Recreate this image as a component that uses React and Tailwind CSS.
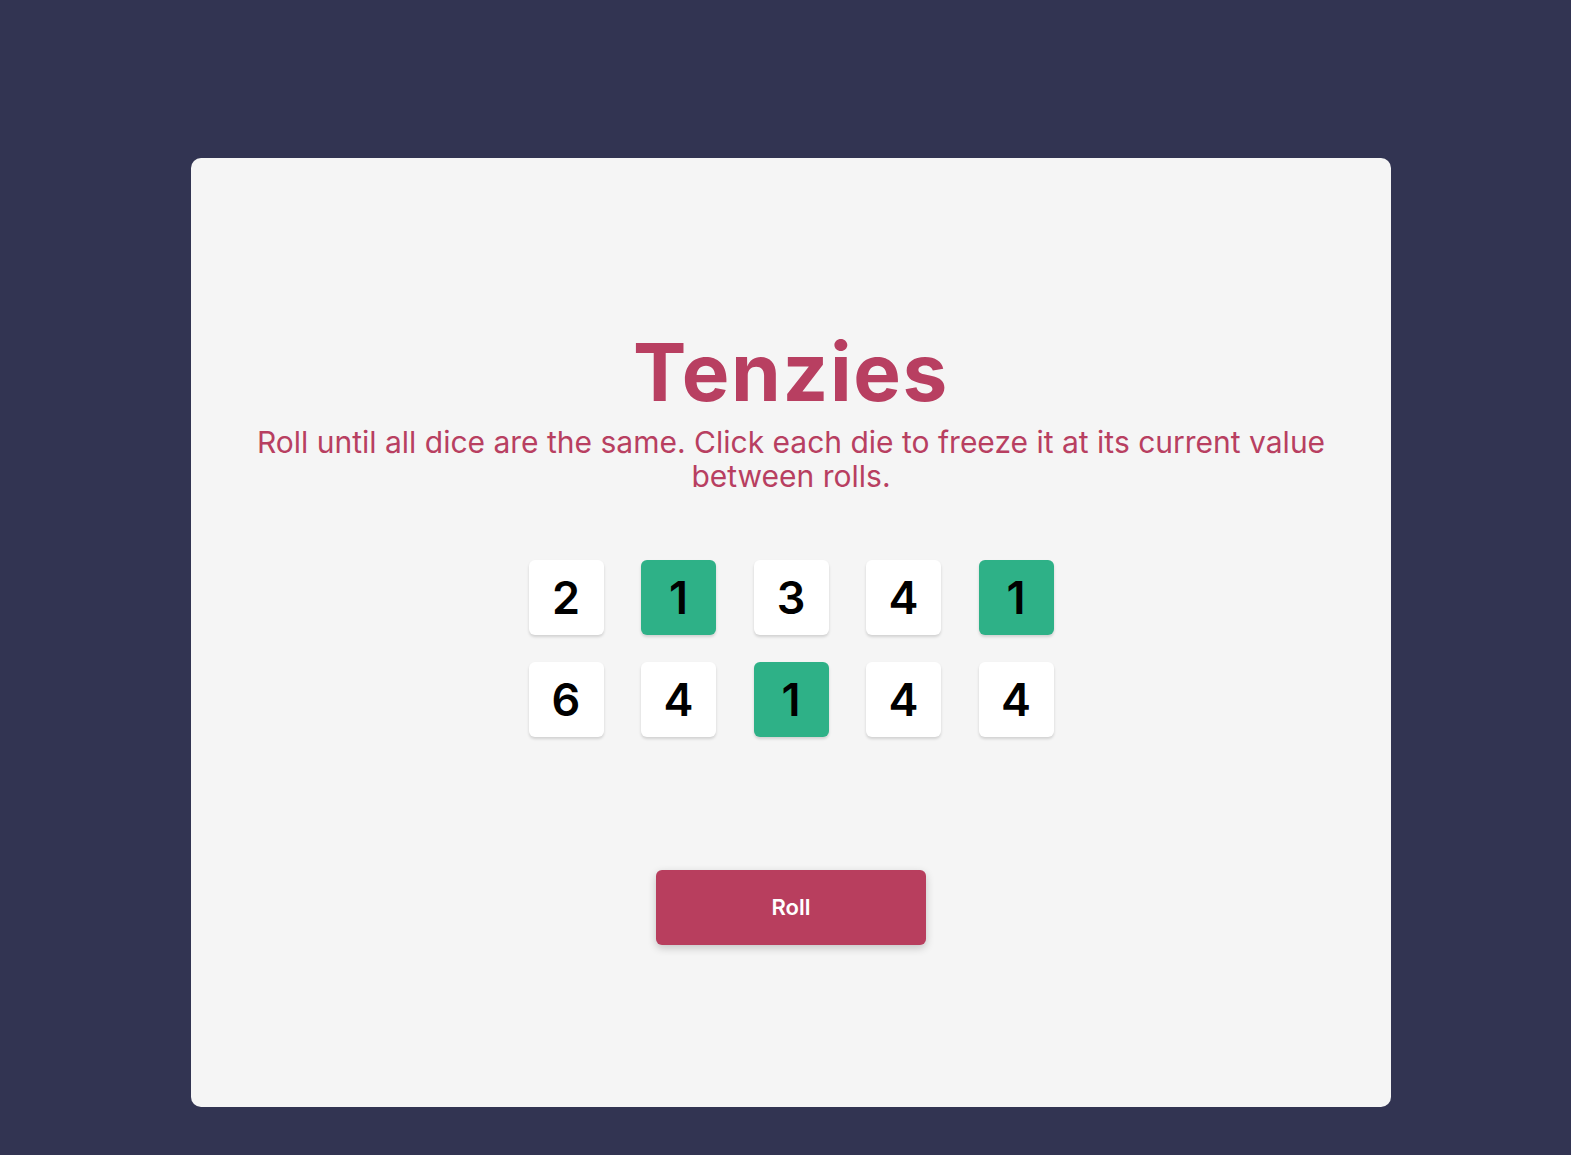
import React, { useState } from 'react';

const initialDice = [
  { value: 2, held: false },
  { value: 1, held: true },
  { value: 3, held: false },
  { value: 4, held: false },
  { value: 1, held: true },
  { value: 6, held: false },
  { value: 4, held: false },
  { value: 1, held: true },
  { value: 4, held: false },
  { value: 4, held: false },
];

const Die = ({ value, held, onClick }) => (
  <button
    onClick={onClick}
    className={`w-[75px] h-[75px] rounded-[6px] flex items-center justify-center text-[45px] font-semibold text-black leading-none shadow-[0_2px_3px_rgba(0,0,0,0.15)] ${
      held ? 'bg-[#2eb187]' : 'bg-white'
    }`}
  >
    {value}
  </button>
);

export default function App() {
  const [dice, setDice] = useState(initialDice);

  const holdDie = (index) => {
    setDice((prev) => prev.map((d, i) => (i === index ? { ...d, held: !d.held } : d)));
  };

  const rollDice = () => {
    setDice((prev) =>
      prev.map((d) => (d.held ? d : { ...d, value: Math.ceil(Math.random() * 6) }))
    );
  };

  return (
    <div
      className="min-h-screen bg-[#323452] flex justify-center pt-[158px] pl-[11px] pb-[48px]"
      style={{ fontFamily: 'Inter, "Noto Sans", sans-serif' }}
    >
      <main className="w-[1200px] h-[949px] bg-[#f5f5f5] rounded-[10px] flex flex-col items-center pt-[174px] px-[50px]">
        {/* Title */}
        <h1 className="text-[80px] leading-[80px] font-bold text-[#b83f61] tracking-[1.6px]">
          Tenzies
        </h1>
        <p className="mt-[13px] text-[30px] leading-[34px] text-[#b83f61] text-center">
          Roll until all dice are the same. Click each die to freeze it at its current value
          between rolls.
        </p>

        {/* Dice */}
        <div className="mt-[67px] grid grid-cols-5 gap-x-[37.5px] gap-y-[27px]">
          {dice.map((die, index) => (
            <Die key={index} value={die.value} held={die.held} onClick={() => holdDie(index)} />
          ))}
        </div>

        {/* Roll button */}
        <button
          onClick={rollDice}
          className="mt-[133px] w-[270px] h-[75px] rounded-[6px] bg-[#b83e5e] text-white text-[22px] font-semibold shadow-[0_3px_8px_rgba(0,0,0,0.2)]"
        >
          Roll
        </button>
      </main>
    </div>
  );
}
